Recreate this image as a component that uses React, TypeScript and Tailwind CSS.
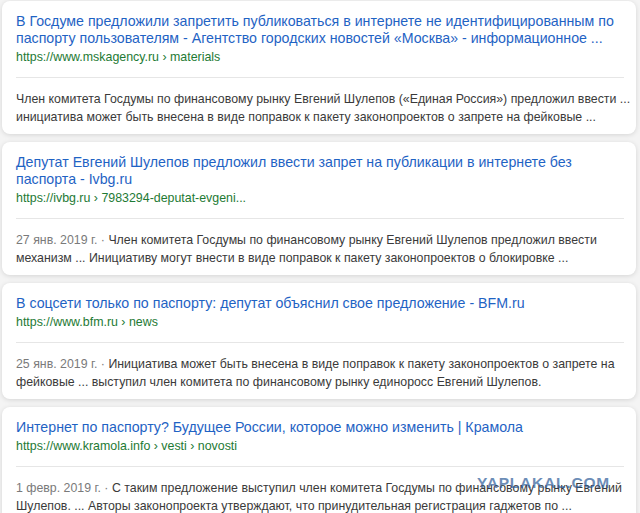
import React from "react";

type Item = {
  title: string[];
  url: string;
  date?: string;
  snippet: string[];
};

const items: Item[] = [
  {
    title: [
      "В Госдуме предложили запретить публиковаться в интернете не идентифицированным по",
      "паспорту пользователям - Агентство городских новостей «Москва» - информационное ...",
    ],
    url: "https://www.mskagency.ru › materials",
    snippet: [
      "Член комитета Госдумы по финансовому рынку Евгений Шулепов («Единая Россия») предложил ввести ...",
      "инициатива может быть внесена в виде поправок к пакету законопроектов о запрете на фейковые ...",
    ],
  },
  {
    title: [
      "Депутат Евгений Шулепов предложил ввести запрет на публикации в интернете без",
      "паспорта - Ivbg.ru",
    ],
    url: "https://ivbg.ru › 7983294-deputat-evgeni...",
    date: "27 янв. 2019 г.",
    snippet: [
      "Член комитета Госдумы по финансовому рынку Евгений Шулепов предложил ввести",
      "механизм ... Инициативу могут внести в виде поправок к пакету законопроектов о блокировке ...",
    ],
  },
  {
    title: ["В соцсети только по паспорту: депутат объяснил свое предложение - BFM.ru"],
    url: "https://www.bfm.ru › news",
    date: "25 янв. 2019 г.",
    snippet: [
      "Инициатива может быть внесена в виде поправок к пакету законопроектов о запрете на",
      "фейковые ... выступил член комитета по финансовому рынку единоросс Евгений Шулепов.",
    ],
  },
  {
    title: ["Интернет по паспорту? Будущее России, которое можно изменить | Крамола"],
    url: "https://www.kramola.info › vesti › novosti",
    date: "1 февр. 2019 г.",
    snippet: [
      "С таким предложение выступил член комитета Госдумы по финансовому рынку Евгений",
      "Шулепов. ... Авторы законопроекта утверждают, что принудительная регистрация гаджетов по ...",
    ],
  },
];

function Card({ item }: { item: Item }) {
  return (
    <div className="bg-white rounded-[8px] shadow-[0_1px_5px_rgba(0,0,0,0.13)] pt-[12px] pb-[8px] pl-[14px] pr-[10px]">
      <div className="text-[14.2px] leading-[17px] text-[#1f63c4] whitespace-nowrap">
        {item.title.map((t, i) => (
          <div key={i}>{t}</div>
        ))}
      </div>
      <div className="mt-[2px] text-[12.4px] leading-[17px] text-[#1e7a34] whitespace-nowrap">
        {item.url}
      </div>
      <div className="mt-[11px] h-px bg-[#e6e6e6] mr-[2px]" />
      <div className="mt-[13px] text-[12.35px] leading-[17.5px] text-[#3a3a3a] whitespace-nowrap">
        <div>
          {item.date && (
            <span className="text-[#7a7a7a]">{item.date} · </span>
          )}
          {item.snippet[0]}
        </div>
        <div>{item.snippet[1]}</div>
      </div>
    </div>
  );
}

export default function App() {
  return (
    <div
      className="relative w-[640px] h-[513px] overflow-hidden bg-[#f4f4f4] pl-[2px] pr-[4px] pt-[1px] flex flex-col gap-[8px]"
      style={{ fontFamily: '"Liberation Sans", Arial, sans-serif' }}
    >
      {items.map((it, i) => (
        <Card key={i} item={it} />
      ))}
      <div className="absolute left-[477px] top-[474px] text-[15.5px] leading-[18px] font-bold tracking-[0.8px] text-[#2f5d9a] opacity-70">
        YAPLAKAL.COM
      </div>
    </div>
  );
}
